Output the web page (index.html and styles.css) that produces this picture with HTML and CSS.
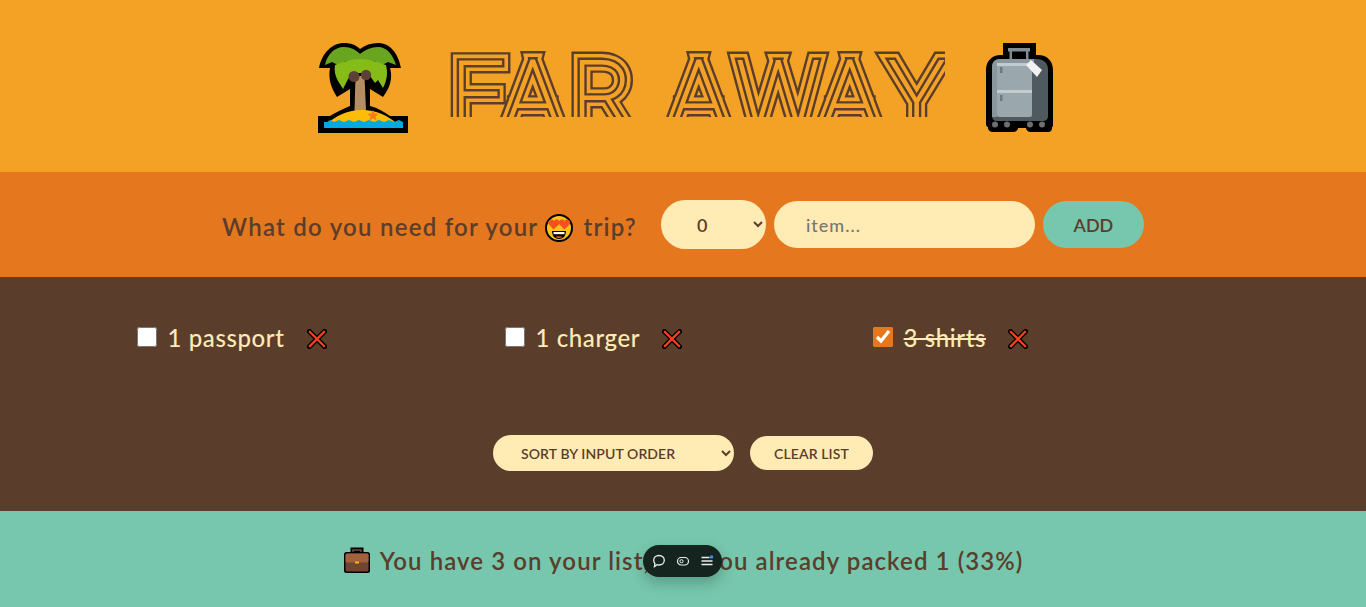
FILE: index.html
```html
<!DOCTYPE html>
<html lang="en">
<head>
<meta charset="utf-8">
<title>Far Away</title>
<link rel="stylesheet" href="styles.css">
</head>
<body>
<div class="app">
  <header class="hero">
    <svg class="emoji-big" width="90" height="90" viewBox="0 0 90 90" aria-hidden="true">
      <path fill="#000" d="M1 25C4 10 14 0 26 0c7 0 12 2 16 6 5-4 11-6 18-6 12 0 20 10 23 25H72c3 10 0 20-7 29L52 46v17c8 2 14 6 20 10h18v17H0V73h12c6-4 13-7 20-10V46l-13 8C13 45 10 35 12 25z"/>
      <path fill="#6aa51f" d="M7 22C9 12 16 4 26 4c7 0 12 3 16 7 5-4 11-7 18-7 9 0 15 8 18 18l-8-3-6 3-8-4-14 2-14-2-8 4-6-3z"/>
      <path fill="#86bc17" d="M17 22c7-3 17-6 25-6s18 3 26 6c2 8 1 15-3 23l-5-8-3 3-7-10H35l-5 6-5 10-5-8c-3-5-4-11-3-16z"/>
      <path fill="#b58d63" d="M37.500 33h9l1.500 35H36.500z"/>
      <circle cx="36" cy="33.500" r="5.500" fill="#5d4037"/>
      <circle cx="48" cy="32" r="5.200" fill="#5d4037"/>
      <path fill="#fdbc08" d="M9 81c8-8 21-14 35-14s27 6 35 14z"/>
      <path fill="#00a9e0" d="M6 79h3l3-2 4 2 5-2 5 2 5-2 5 2 5-2 5 2 5-2 5 2 5-2 5 2 5-2 5 2 5-2 4 2v6H6z"/>
      <path fill="#f57c1f" d="M55 67l1.500 3.500 4 .3-3 2.700 1 4-3.500-2.200-3.500 2.200 1-4-3-2.700 4-.3z"/>
    </svg>

    <h1 class="title">
      <svg class="title-art" width="497" height="66" viewBox="0 0 497 66" role="img" aria-label="FAR AWAY">
        <defs>
          <clipPath id="title-clip"><rect x="0" y="0" width="497" height="66"/></clipPath>
          <text id="title-text" class="title-text" x="3 57 124 0 223 288 374 441" y="76">FAR AWAY</text>
        </defs>
        <g clip-path="url(#title-clip)">
          <use href="#title-text" class="layer-1"/>
          <use href="#title-text" class="layer-2"/>
          <use href="#title-text" class="layer-3"/>
          <use href="#title-text" class="layer-4"/>
        </g>
      </svg>
    </h1>

    <svg class="emoji-big" width="69" height="90" viewBox="0 0 69 90" aria-hidden="true">
      <path fill="#000" d="M18 0h33v12h2c9 0 15 6 15 15v54c0 2 0 3-1 3v1c0 2-1 4-4 4H46c-3 0-5-2-5-4H33c0 2-2 4-5 4H8c-3 0-5-2-5-4v-1c-1 0-2-1-2-3V27c0-9 6-15 15-15h2z"/>
      <path fill="#7f8c91" d="M23 5h22v3.500h-1.500V16H41V8.500H27V16h-2.500V8.500H23z"/>
      <path fill="#4f5a60" d="M15 16h36c8 0 12 4 12 11v46c0 3-2 5-5 5H12c-3 0-5-2-5-5V24c0-5 3-8 8-8z"/>
      <path fill="#8a979c" d="M15 16h34v4H12v54H7V24c0-5 3-8 8-8z"/>
      <rect x="12" y="20" width="35" height="54" rx="2" fill="#9aa8ad"/>
      <rect x="12" y="20" width="35" height="3" fill="#c2ccce"/>
      <rect x="12" y="47" width="35" height="3" fill="#c2ccce"/>
      <rect x="15" y="24" width="2.500" height="6" fill="#6e7a7f"/>
      <rect x="15" y="52" width="2.500" height="6" fill="#6e7a7f"/>
      <path fill="#f2f2f2" d="M41 22l5-5 11 10-5 7z"/>
      <g fill="#6f6f6f"><circle cx="10" cy="81.500" r="3"/><circle cx="22" cy="81.500" r="3"/><circle cx="45" cy="81.500" r="3"/><circle cx="57" cy="81.500" r="3"/></g>
    </svg>
  </header>

  <form class="add-form">
    <h3 class="form-title">What do you need for your <svg class="emoji-face" width="28" height="28" viewBox="0 0 28 28" aria-hidden="true">
        <circle cx="14" cy="14" r="13" fill="#fcc21b" stroke="#000" stroke-width="2"/>
        <path fill="#f4511e" d="M8.500 15.500L4 10.500c-1.500-2.500 0-5 2.500-5 1 0 2 .6 2.500 1.500.5-.9 1.500-1.500 2.500-1.500 2.500 0 4 2.500 2.500 5zM19.500 15.500L14.500 10.500c-1.500-2.500 0-5 2.500-5 1 0 2 .6 2.500 1.500.5-.9 1.500-1.500 2.500-1.500 2.500 0 4 2.500 2.500 5z"/>
        <path fill="#000" d="M7 17h14c0 5-3 8-7 8s-7-3-7-8z"/>
        <path fill="#fff" d="M8.500 18h11v2.200h-11z"/>
        <path fill="#f4511e" d="M10.500 23c1-1 5-1 7 0-1 1-5 1.500-7 0z"/>
      </svg> trip?</h3>
    <select class="pill qty"><option>0</option></select>
    <input class="pill item-input" type="text" placeholder="item...">
    <button class="pill add-btn" type="button">ADD</button>
  </form>

  <main class="list">
    <ul class="items">
      <li class="item">
        <input class="check" type="checkbox">
        <span class="label">1 passport</span>
        <button class="remove" type="button" aria-label="Remove"><svg width="20" height="20" viewBox="0 0 20 20"><use href="#cross"/></svg></button>
      </li>
      <li class="item">
        <input class="check" type="checkbox">
        <span class="label">1 charger</span>
        <button class="remove" type="button" aria-label="Remove"><svg width="20" height="20" viewBox="0 0 20 20"><use href="#cross"/></svg></button>
      </li>
      <li class="item">
        <input class="check" type="checkbox" checked>
        <span class="label done">3 shirts</span>
        <button class="remove" type="button" aria-label="Remove"><svg width="20" height="20" viewBox="0 0 20 20"><use href="#cross"/></svg></button>
      </li>
    </ul>
    <div class="actions">
      <select class="pill-small sort"><option>SORT BY INPUT ORDER</option></select>
      <button class="pill-small clear" type="button">CLEAR LIST</button>
    </div>
  </main>

  <footer class="stats">
    <svg class="emoji-case" width="28" height="28" viewBox="0 0 28 28" aria-hidden="true">
      <path fill="none" stroke="#000" stroke-width="5" d="M10 7V4h8v3"/>
      <path fill="none" stroke="#6d4c41" stroke-width="1.500" d="M10 7V4h8v3"/>
      <rect x="1" y="6" width="26" height="21" rx="2.500" fill="#000"/>
      <rect x="2.500" y="7.500" width="23" height="18" rx="1.500" fill="#6d4530"/>
      <rect x="2.500" y="7.500" width="23" height="9" rx="1.500" fill="#a0613c"/>
      <rect x="12" y="15.500" width="4" height="2" fill="#ffb300"/>
    </svg>
    <span class="stats-text">You have 3 on your list, and you already packed 1 (33%)</span>
  </footer>
</div>

<aside class="widget" aria-hidden="true">
  <svg width="14" height="14" viewBox="0 0 14 14"><path fill="none" stroke="#e8eeec" stroke-width="1.300" d="M7 1.500c3 0 5.300 2 5.300 4.800S10 11 7 11c-.7 0-1.300 0-2-.3L2.500 12.500l.4-3C2 8.500 1.700 7.400 1.700 6.300 1.700 3.500 4 1.500 7 1.500z"/></svg>
  <svg width="14" height="14" viewBox="0 0 14 14"><rect x="1.500" y="3.500" width="11" height="7.500" rx="3.700" fill="none" stroke="#e8eeec" stroke-width="1.200"/><circle cx="5.500" cy="7.200" r="1.600" fill="none" stroke="#e8eeec" stroke-width="1"/></svg>
  <svg width="14" height="14" viewBox="0 0 14 14"><path stroke="#e8eeec" stroke-width="1.300" d="M1.500 3.500h8M1.500 7h11M1.500 10.500h11"/><circle cx="11.500" cy="3" r="1.800" fill="#3b8fe8"/></svg>
</aside>

<svg class="sprite" width="0" height="0" aria-hidden="true">
  <defs>
    <g id="cross">
      <path stroke="#000" stroke-width="5" stroke-linecap="square" d="M2.500 2.500l15 15M17.500 2.500l-15 15"/>
      <path stroke="#f4401e" stroke-width="2.400" stroke-linecap="square" d="M3 3l14 14M17 3L3 17"/>
    </g>
  </defs>
</svg>
</body>
</html>
```

FILE: styles.css
```css
* { margin: 0; padding: 0; box-sizing: border-box; }

html, body { height: 100%; overflow: hidden; }

body {
  font-family: "Lato", "Noto Sans", sans-serif;
  color: #5a3e2b;
}

.app {
  height: 607px;
  display: grid;
  grid-template-rows: 172px 105px 234px 96px;
}

.hero {
  background: #f4a226;
  display: flex;
  justify-content: center;
  align-items: center;
  gap: 40px;
  padding: 4px 0 0 6px;
}

.emoji-big { display: block; flex: none; }

.title { display: flex; line-height: 0; margin-bottom: 9px; }

.title-art { display: block; overflow: hidden; }

.title-text {
  font-family: "Roboto", sans-serif;
  font-weight: 100;
  font-size: 93px;
  stroke-linejoin: miter;
  stroke-miterlimit: 3;
}

.layer-1 { fill: #5a3e2b; stroke: #5a3e2b; stroke-width: 18.8px; }
.layer-2 { fill: #f4a226; stroke: #f4a226; stroke-width: 14px; }
.layer-3 { fill: #5a3e2b; stroke: #5a3e2b; stroke-width: 6.8px; }
.layer-4 { fill: #f4a226; stroke: #f4a226; stroke-width: 2px; }

.add-form {
  background: #e5771f;
  display: flex;
  justify-content: center;
  align-items: center;
  gap: 8px;
}

.form-title {
  font-size: 24px;
  font-weight: 600;
  margin-right: 16px;
  padding-top: 4px;
  white-space: nowrap;
  letter-spacing: 1.25px;
}

.emoji-face { vertical-align: -6px; margin-right: 3px; }

.pill {
  background: #ffebb3;
  color: #5a3e2b;
  border: none;
  border-radius: 100px;
  font-family: inherit;
  font-size: 18px;
  font-weight: 600;
  height: 47px;
}

.qty { width: 105px; height: 49px; padding: 0 32px; }

.item-input { width: 261px; padding: 0 32px; font-weight: 500; letter-spacing: 1px; }
.item-input::placeholder { color: #757575; }

.add-btn { width: 101px; background: #76c7ad; }

.list {
  background: #5a3e2b;
  color: #ffebb3;
  display: flex;
  flex-direction: column;
  align-items: center;
}

.items {
  width: 80%;
  list-style: none;
  display: grid;
  grid-template-columns: repeat(3, 1fr);
  gap: 11.2px;
  padding-top: 45px;
}

.item {
  display: flex;
  align-items: center;
  height: 30px;
}

.check {
  width: 20px;
  height: 20px;
  accent-color: #e5771f;
  margin: 0 11px 0 0;
  flex: none;
}

.label { font-size: 24px; font-weight: 500; letter-spacing: 0.6px; }
.done { text-decoration: line-through; }

.remove {
  background: none;
  border: none;
  margin-left: 22px;
  display: flex;
  margin-top: 4px;
}

.actions {
  margin-top: 83px;
  display: flex;
  align-items: center;
  gap: 16px;
}

.pill-small {
  background: #ffebb3;
  color: #5a3e2b;
  border: none;
  border-radius: 100px;
  font-family: inherit;
  font-size: 14px;
  font-weight: 600;
  letter-spacing: 0.1px;
}

.sort { width: 241px; height: 36px; padding: 0 24px; }
.clear { width: 123px; height: 34px; }

.stats {
  background: #76c7ad;
  display: flex;
  justify-content: center;
  align-items: center;
  gap: 9px;
  padding-top: 2px;
}

.stats-text { font-size: 24px; font-weight: 600; letter-spacing: 1.08px; }

.emoji-case { display: block; flex: none; }

.widget {
  position: fixed;
  left: 643px;
  top: 545px;
  width: 79px;
  height: 32px;
  border-radius: 16px;
  background: #16241f;
  display: flex;
  align-items: center;
  justify-content: center;
  gap: 10px;
  box-shadow: 0 6px 14px rgba(0, 0, 0, 0.22);
}

.sprite { position: absolute; }
```
